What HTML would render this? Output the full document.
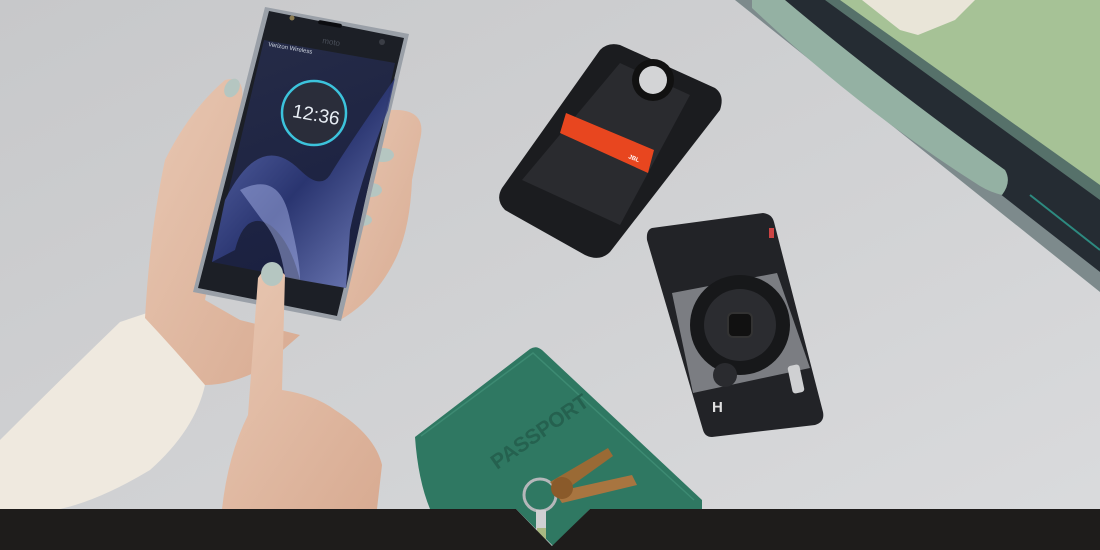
<!DOCTYPE html>
<html><head><meta charset="utf-8"><style>
html,body{margin:0;padding:0;width:1100px;height:550px;overflow:hidden;background:#cfd0d2}
svg{display:block}
text{font-family:"Liberation Sans",sans-serif}
</style></head><body>
<svg width="1100" height="550" viewBox="0 0 1100 550" xmlns="http://www.w3.org/2000/svg">
<defs>
<linearGradient id="bg" x1="0" y1="0" x2="1" y2="1">
<stop offset="0" stop-color="#c7c8ca"/><stop offset="0.6" stop-color="#d2d3d5"/><stop offset="1" stop-color="#dadbdd"/></linearGradient>
<linearGradient id="scr" x1="0" y1="0" x2="0.3" y2="1">
<stop offset="0" stop-color="#262c48"/><stop offset="1" stop-color="#1a2040"/></linearGradient>
<linearGradient id="skin" x1="0" y1="0" x2="1" y2="1">
<stop offset="0" stop-color="#e8c7b2"/><stop offset="1" stop-color="#d8ab92"/></linearGradient>
<linearGradient id="sw" x1="0" y1="0" x2="1" y2="1">
<stop offset="0" stop-color="#6f7fc8"/><stop offset="0.5" stop-color="#2c3878"/><stop offset="1" stop-color="#8a98d8"/></linearGradient>
</defs>
<rect width="1100" height="550" fill="url(#bg)"/>

<!-- suitcase -->
<polygon points="735,0 1100,0 1100,292" fill="#7d8a8c"/>
<polygon points="752,0 1100,0 1100,272" fill="#252c33"/>
<polygon points="825,0 1100,0 1100,200" fill="#56716a"/>
<polygon points="840,0 1100,0 1100,185" fill="#a6c296"/>
<polygon points="862,0 975,0 955,20 918,35 900,30" fill="#e9e5d8"/>
<path d="M752,0 L785,0 Q880,80 1005,170 Q1012,182 1002,195 Q990,192 980,186 Q860,110 752,8 Z" fill="#94b1a3"/>
<line x1="1030" y1="195" x2="1100" y2="250" stroke="#2d8a80" stroke-width="2"/>

<!-- sleeve -->
<path d="M0,440 Q60,380 120,322 L150,312 Q185,345 205,385 Q195,430 150,470 Q100,500 60,509 L0,509 Z" fill="#efe9df"/>
<!-- wrist/palm -->
<path d="M145,318 Q150,230 165,160 Q190,110 225,80 Q245,75 242,100 L232,160 L205,300 L240,320 L300,335 L260,370 Q230,385 205,385 Q175,350 145,318 Z" fill="url(#skin)"/>
<!-- right fingers -->
<path d="M390,110 Q428,108 420,140 L412,180 Q410,230 395,260 Q375,300 340,320 L330,318 L360,120 Z" fill="url(#skin)"/>
<ellipse cx="383" cy="155" rx="11" ry="7" fill="#b5c6c1"/>
<ellipse cx="371" cy="190" rx="11" ry="7" fill="#b5c6c1"/>
<ellipse cx="362" cy="220" rx="10" ry="6" fill="#b5c6c1"/>
<ellipse cx="232" cy="88" rx="7" ry="10" fill="#b5c6c1" transform="rotate(30 232 88)"/>

<!-- phone -->
<polygon points="265,7 409,34 341,321 193,292" fill="#9aa0a8"/>
<polygon points="269,11 404,38 337,316 198,288" fill="#1c1f26"/>
<polygon points="264,40 395,63 346,288 212,262" fill="url(#scr)"/>
<path d="M225,200 Q260,130 300,170 Q320,190 330,175 Q345,150 395,78 L388,110 Q360,180 350,230 L346,288 L300,280 Q290,240 270,225 Q245,210 235,250 L212,262 Z" fill="url(#sw)" opacity="0.85"/>
<path d="M240,190 Q280,170 290,220 Q300,260 300,280 L285,277 Q280,240 262,220 Z" fill="#a5b2e8" opacity="0.5"/>
<circle cx="314" cy="113" r="32" fill="#2a2d3a" stroke="#3cc3dc" stroke-width="2.5"/>
<text x="315" y="121" font-size="19" fill="#e8eef5" text-anchor="middle" transform="rotate(10 315 121)">12:36</text>
<text x="268" y="46" font-size="6" fill="#cfd6e0" transform="rotate(10 268 46)">Verizon Wireless</text>
<text x="322" y="43" font-size="8" fill="#4a4f5a" transform="rotate(10 322 43)">moto</text>
<rect x="318" y="22" width="24" height="4" rx="2" fill="#0b0c10" transform="rotate(10 330 24)"/>
<circle cx="292" cy="18" r="2.5" fill="#8a7a50"/><circle cx="382" cy="42" r="3" fill="#3a3d45"/>

<!-- pointing hand -->
<path d="M258,278 Q270,258 285,275 L282,390 Q315,395 335,410 Q375,435 382,465 L377,509 L222,509 Q228,455 248,415 Z" fill="url(#skin)"/>
<ellipse cx="272" cy="274" rx="11" ry="12" fill="#b5c6c1"/>

<!-- JBL mod -->
<path d="M620,45 L715,88 Q725,95 720,110 L610,252 Q600,262 585,255 L505,210 Q495,200 502,188 L600,50 Q608,42 620,45 Z" fill="#1b1c1f"/>
<polygon points="620,63 690,95 620,225 522,180" fill="#2a2b2f"/>
<polygon points="566,113 654,150 648,173 560,133" fill="#e8461f"/>
<circle cx="653" cy="80" r="21" fill="#111"/>
<circle cx="653" cy="80" r="14" fill="#d3d4d6"/>
<text x="628" y="158" font-size="6" fill="#fff" font-weight="bold" transform="rotate(22 628 158)">JBL</text>

<!-- camera mod -->
<path d="M652,228 L763,213 Q772,214 774,222 L823,412 Q825,422 815,425 L712,437 Q705,437 703,430 L647,240 Q646,230 652,228 Z" fill="#222327"/>
<polygon points="672,293 777,273 810,368 693,393" fill="#7b7d82"/>
<circle cx="740" cy="325" r="50" fill="#17181a"/>
<circle cx="740" cy="325" r="36" fill="#2b2c30"/>
<rect x="728" y="313" width="24" height="24" rx="5" fill="#111" stroke="#333" stroke-width="2"/>
<circle cx="725" cy="375" r="12" fill="#2a2b2f"/>
<rect x="790" y="365" width="12" height="28" rx="3" fill="#cfd0d2" transform="rotate(-12 796 379)"/>
<text x="712" y="412" font-size="15" fill="#e0e0e0" font-weight="bold">H</text>
<rect x="769" y="228" width="5" height="10" fill="#c44"/>

<!-- passport -->
<path d="M415,437 L530,349 Q536,345 542,350 L702,500 L702,509 L590,509 L553,546 L516,509 L430,509 Q418,480 415,437 Z" fill="#2f7862"/>
<path d="M421,436 L533,353 L694,500" fill="none" stroke="#3d8a72" stroke-width="1.5"/>
<text x="497" y="470" font-size="21" fill="#25614f" font-family="Liberation Serif" font-weight="bold" transform="rotate(-35 497 470)">PASSPORT</text>
<!-- keys -->
<circle cx="540" cy="495" r="16" fill="none" stroke="#b5b7ba" stroke-width="3"/>
<path d="M550,482 L608,448 L613,456 L560,494 Z" fill="#9a6a35"/>
<path d="M555,492 L632,475 L637,485 L562,503 Z" fill="#a87540"/>
<circle cx="562" cy="488" r="11" fill="#8a5a2a"/>
<rect x="536" y="510" width="10" height="20" fill="#cfd0d2"/>
<rect x="537" y="528" width="9" height="12" fill="#a9b882"/>

<!-- bottom bar -->
<polygon points="0,509 516,509 552,546 590,509 1100,509 1100,550 0,550" fill="#1e1c1b"/>
</svg>
</body></html>
